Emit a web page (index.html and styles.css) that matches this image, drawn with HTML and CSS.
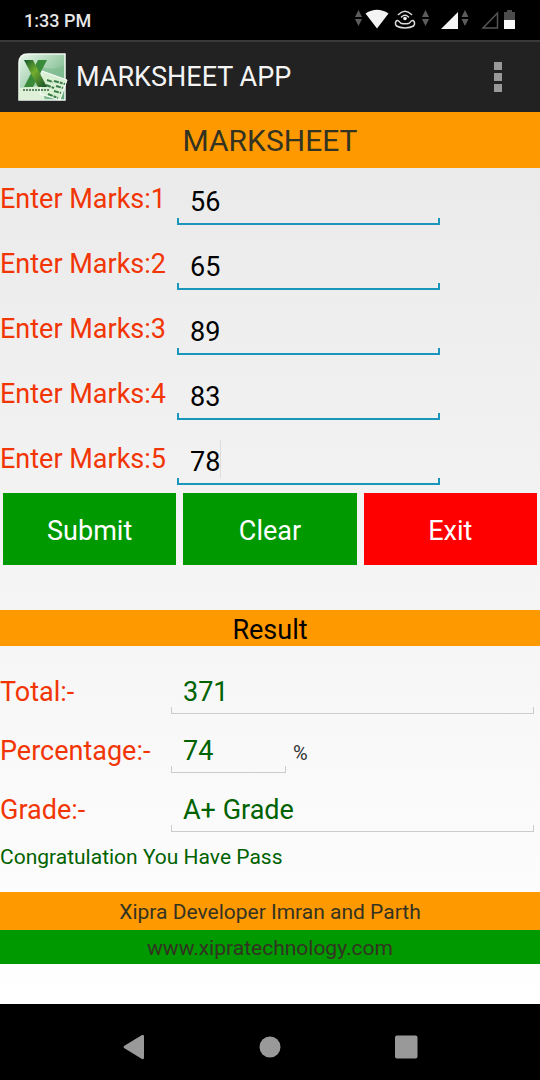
FILE: index.html
```html
<!DOCTYPE html>
<html lang="en">
<head>
<meta charset="utf-8">
<meta name="viewport" content="width=device-width, initial-scale=1">
<title>Marksheet App</title>
<link rel="stylesheet" href="styles.css">
</head>
<body>
<div class="status-bar">
  <span class="clock">1:33 PM</span>
  <svg class="status-icons" width="162" height="24" viewBox="354 8 162 24" aria-hidden="true">
    <g fill="#5c5c5c">
      <path d="M358.500 10l3.500 7h-7zM358.500 26l3.500-7h-7z"/>
      <path d="M425.500 10l3.500 7h-7zM425.500 26l3.500-7h-7z"/>
      <path d="M465 10l3.500 7h-7zM465 26l3.500-7h-7z"/>
    </g>
    <path fill="#f4f4f4" d="M365.500 13.500Q377 6 388.500 13.500L377 28.500z"/>
    <g fill="none" stroke="#ddd" stroke-width="1.500" stroke-linecap="round">
      <path d="M398.500 14.500Q405 8 411.500 14.500M401.500 17Q405 13.500 408.500 17"/>
      <path d="M397 20.500c-2 1-2 4-.5 5.500 4 2.500 13 2.500 17 0 1.500-1.500 1.500-4.500-.5-5.500-2-.5-2.500 2-4 2.700q-4 1.300-8 0c-1.500-.7-2-3.200-4-2.700z"/>
    </g>
    <circle cx="405" cy="18.500" r="1.800" fill="#f4f4f4"/>
    <path fill="#f4f4f4" d="M441 29h17V12z"/>
    <path fill="none" stroke="#555" stroke-width="1.500" d="M483 28h14.500V13z"/>
    <path fill="#4c4c4c" d="M504 12h3v-2h5v2h3v8h-11z"/>
    <path fill="#f8f8f8" d="M504 20h11v9h-11z"/>
  </svg>
</div>

<header class="app-bar">
  <svg class="app-icon" width="50" height="48" viewBox="0 0 50 48" aria-hidden="true">
    <defs>
      <linearGradient id="tile" x1="0" y1="0" x2="1" y2="1">
        <stop offset="0" stop-color="#e9f6ec"/>
        <stop offset=".5" stop-color="#9fceab"/>
        <stop offset="1" stop-color="#5da777"/>
      </linearGradient>
      <linearGradient id="stroke" x1="0" y1="0" x2="1" y2="1">
        <stop offset="0" stop-color="#13572c"/>
        <stop offset=".45" stop-color="#72ad2f"/>
        <stop offset="1" stop-color="#124e2a"/>
      </linearGradient>
    </defs>
    <path fill="url(#tile)" stroke="#f2faf3" stroke-width="1.500" d="M10 1h37v46H1V10Q1 1 10 1z"/>
    <path fill="#79b98b" opacity=".6" d="M24 14Q36 18 46 12V24L24 20z"/>
    <path fill="#dff0d8" d="M1 35l22-2 4 14H1z"/>
    <path fill="#d9efd1" stroke="#fff" d="M24 18l25 9-7 20-20-6z"/>
    <path stroke="#387b46" stroke-width="2" stroke-dasharray="5 1 3 1" d="M36 28l11 3M29 27l6 2M38 33l7 2M28 32l8 3M36 38l7 2M30 41l10 4"/>
    <path stroke="#37603e" stroke-width="1.500" stroke-dasharray="2 1" d="M5 37h26"/>
    <path fill="#3a8b39" d="M20 7h9L15 34H6z"/>
    <path fill="url(#stroke)" d="M6 7h9l14 27h-9z"/>
  </svg>
  <h1 class="app-name">MARKSHEET APP</h1>
  <button class="menu-button" type="button" aria-label="More options">
    <span class="menu-dot"></span><span class="menu-dot"></span><span class="menu-dot"></span>
  </button>
</header>

<main class="content">
  <h2 class="page-title">MARKSHEET</h2>
  <form class="marks-form">
    <div class="mark-row"><label class="label" for="m1">Enter Marks:1</label><input class="field mark-field" id="m1" type="text" inputmode="numeric" value="56"></div>
    <div class="mark-row"><label class="label" for="m2">Enter Marks:2</label><input class="field mark-field" id="m2" type="text" inputmode="numeric" value="65"></div>
    <div class="mark-row"><label class="label" for="m3">Enter Marks:3</label><input class="field mark-field" id="m3" type="text" inputmode="numeric" value="89"></div>
    <div class="mark-row"><label class="label" for="m4">Enter Marks:4</label><input class="field mark-field" id="m4" type="text" inputmode="numeric" value="83"></div>
    <div class="mark-row"><label class="label" for="m5">Enter Marks:5</label><input class="field mark-field mark-field-active" id="m5" type="text" inputmode="numeric" value="78"></div>
    <div class="actions">
      <button class="action" type="button">Submit</button>
      <button class="action" type="button">Clear</button>
      <button class="action action-exit" type="button">Exit</button>
    </div>
  </form>

  <h2 class="result-title">Result</h2>
  <section class="results">
    <div class="result-row"><label class="label" for="total">Total:-</label><input class="field result-field" id="total" type="text" value="371"></div>
    <div class="result-row"><label class="label" for="percentage">Percentage:-</label><input class="field result-field result-field-short" id="percentage" type="text" value="74"><span class="unit">%</span></div>
    <div class="result-row"><label class="label" for="grade">Grade:-</label><input class="field result-field" id="grade" type="text" value="A+ Grade"></div>
    <p class="message">Congratulation You Have Pass</p>
  </section>

  <footer>
    <p class="credit">Xipra Developer Imran and Parth</p>
    <p class="site"><a class="site-link" href="#">www.xipratechnology.com</a></p>
  </footer>
</main>

<nav class="nav-bar" aria-label="System navigation">
  <button class="nav-button" type="button" aria-label="Back"><svg width="26" height="26" viewBox="0 0 26 26"><path fill="#999" d="M2 12Q1 13 2 14L20 25Q22 25.500 22 24V2Q22 .5 20 1z"/></svg></button>
  <button class="nav-button" type="button" aria-label="Home"><svg width="26" height="26" viewBox="0 0 26 26"><circle cx="13" cy="13" r="10.500" fill="#999"/></svg></button>
  <button class="nav-button" type="button" aria-label="Recent apps"><svg width="26" height="26" viewBox="0 0 26 26"><rect x="2" y="1.500" width="22.500" height="23" rx="2" fill="#999"/></svg></button>
</nav>
</body>
</html>
```

FILE: styles.css
```css
* {
  box-sizing: border-box;
}

body {
  margin: 0;
  min-height: 100vh;
  display: flex;
  flex-direction: column;
  background: #000;
  font-family: Roboto, "Liberation Sans", sans-serif;
  font-size: 27px;
}

h1, h2, p {
  margin: 0;
  font-weight: 400;
}

button, input {
  border: 0;
  border-radius: 0;
  margin: 0;
  padding: 0;
  background: none;
  font: inherit;
}

.status-bar {
  display: flex;
  justify-content: space-between;
  align-items: center;
  height: 40px;
  padding: 0 24px;
  background: #000;
}

.clock {
  color: #e6e6e6;
  font-size: 18px;
  font-weight: 500;
}

.app-bar {
  display: flex;
  align-items: center;
  height: 72px;
  padding: 0 24px 0 18px;
  border-top: 2px solid #3a3a3a;
  background: #222;
}

.app-name {
  flex: 1;
  padding-left: 8px;
  color: #f4f4f4;
  font-size: 27px;
}

.menu-button {
  display: flex;
  flex-direction: column;
  align-items: center;
  gap: 3px;
  width: 36px;
}

.menu-dot {
  width: 8px;
  height: 8px;
  background: #999;
}

.content {
  flex: 1;
  background: linear-gradient(#e9e9e9, #fff);
}

.page-title {
  background: #f90;
  color: #333322;
  font-size: 30px;
  line-height: 58px;
  height: 56px;
  text-align: center;
}

.mark-row {
  display: flex;
  align-items: flex-start;
  height: 65px;
}

.mark-row .label {
  width: 177px;
  line-height: 62px;
}

.label {
  flex: none;
  color: #f23505;
}

.field {
  --line: #1a96bd;
  --thickness: 2px;
  flex: 1;
  min-width: 0;
  outline: none;
  background:
    linear-gradient(var(--line), var(--line)) left bottom / var(--thickness) 7px no-repeat,
    linear-gradient(var(--line), var(--line)) right bottom / var(--thickness) 7px no-repeat,
    linear-gradient(var(--line), var(--line)) left bottom / 100% var(--thickness) no-repeat;
}

.mark-field {
  height: 48px;
  margin: 9px 100px 0 0;
  padding: 2px 0 0 13px;
  color: #000;
}

.mark-field-active {
  background:
    linear-gradient(var(--line), var(--line)) left bottom / 2px 7px no-repeat,
    linear-gradient(var(--line), var(--line)) right bottom / 2px 7px no-repeat,
    linear-gradient(var(--line), var(--line)) left bottom / 100% 2px no-repeat,
    linear-gradient(#ddd, #ddd) 43px 3px / 1px 38px no-repeat;
}

.actions {
  display: flex;
  gap: 7px;
  padding: 0 3px;
}

.action {
  flex: 1;
  height: 72px;
  background: #090;
  color: #fff;
  padding-top: 3px;
}

.action-exit {
  background: #f00;
}

.result-title {
  margin-top: 45px;
  background: #f90;
  color: #000;
  font-size: 27px;
  line-height: 40px;
  height: 36px;
  text-align: center;
}

.results {
  padding-top: 17px;
}

.result-row {
  display: flex;
  align-items: flex-start;
  height: 59px;
  padding-right: 6px;
}

.result-row .label {
  width: 171px;
  line-height: 58px;
}

.result-field {
  --line: #ccc;
  --thickness: 1px;
  height: 45px;
  margin-top: 6px;
  padding-left: 12px;
  color: #006200;
}

.result-field-short {
  flex: none;
  width: 115px;
}

.unit {
  padding-left: 7px;
  color: #333;
  font-size: 20px;
  line-height: 62px;
}

.message {
  height: 52px;
  color: #006200;
  font-size: 21px;
  line-height: 34px;
}

.credit,
.site {
  color: #333322;
  font-size: 21px;
  text-align: center;
}

.credit {
  height: 38px;
  background: #f90;
  line-height: 40px;
}

.site {
  height: 34px;
  background: #090;
  line-height: 36px;
}

.site-link {
  color: inherit;
  text-decoration: none;
}

.nav-bar {
  display: flex;
  justify-content: space-evenly;
  align-items: center;
  height: 76px;
  padding: 10px 23px 0;
  background: #000;
}

.nav-button {
  display: flex;
  justify-content: center;
  width: 48px;
}
```
